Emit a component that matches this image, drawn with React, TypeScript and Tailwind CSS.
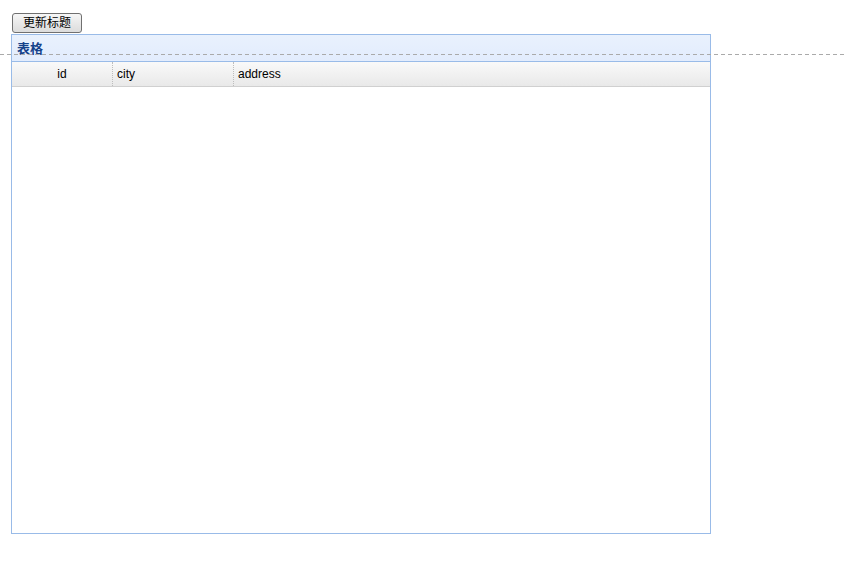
const columns = [
  { key: "id", title: "id", width: "w-[101px]", align: "justify-center" },
  { key: "city", title: "city", width: "w-[121px]", align: "justify-start pl-[4px]" },
  { key: "address", title: "address", width: "flex-1", align: "justify-start pl-[4px]" },
];

export default function App() {
  return (
    <div className="relative w-[849px] h-[562px] bg-white font-['Liberation_Sans','Noto_Sans_CJK_SC',sans-serif] text-[12px] text-black">
      <div className="pt-[13px] pl-[12px]">
        <button className="h-[20px] w-[70px] rounded-[3px] border border-[#707070] bg-gradient-to-b from-[#f6f6f6] to-[#dcdcdc] text-[12px] leading-[18px] text-black">
          更新标题
        </button>
      </div>

      <div className="ml-[11px] mt-[1px] w-[700px] h-[500px] border border-[#99bbe8] flex flex-col">
        <div className="h-[27px] border-b border-[#99bbe8] bg-gradient-to-b from-[#e9f1fd] to-[#e2ecfd] flex items-center pl-[5px] pt-[2px]">
          <span className="font-bold text-[13px] text-[#15428b]">表格</span>
        </div>
        <div className="h-[25px] flex border-b border-[#d0d0d0] bg-gradient-to-b from-[#f9f9f9] to-[#e9e9e9]">
          {columns.map((c, i) => (
            <div
              key={c.key}
              className={`${c.width} flex items-center ${c.align} ${i < columns.length - 1 ? "border-r border-dotted border-r-[#bdbdbd]" : ""}`}
            >
              {c.title}
            </div>
          ))}
        </div>
        <div className="flex-1 bg-white" />
      </div>

      <div className="absolute left-0 w-[847px] top-[54px] h-[1px] bg-[repeating-linear-gradient(to_right,#aaaaaa_0px,#aaaaaa_4px,transparent_4px,transparent_7px)]" />
    </div>
  );
}
